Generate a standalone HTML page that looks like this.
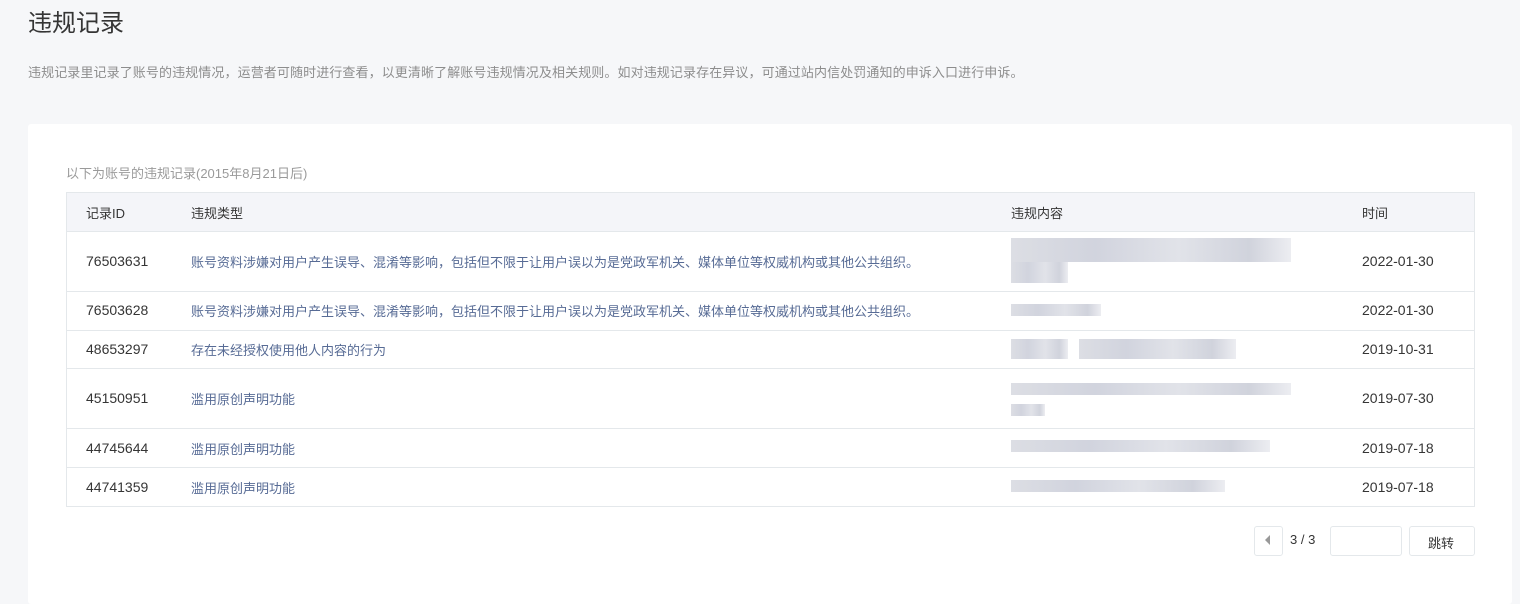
<!DOCTYPE html>
<html><head><meta charset="utf-8"><style>
*{margin:0;padding:0;box-sizing:border-box}
body{width:1520px;height:591px;background:#f6f7f9;font-family:"Liberation Sans","Noto Sans CJK SC",sans-serif;position:relative;overflow:hidden;color:#353535}
.a{position:absolute;white-space:nowrap}
h1{position:absolute;left:28px;top:3px;font-size:24px;font-weight:normal;color:#353535}
.card{position:absolute;left:28px;top:124px;width:1484px;height:480px;background:#fff;border-radius:3px}
.tbl{position:absolute;left:66px;top:192px;width:1409px;height:315px;border:1px solid #e4e8eb}
.hd{position:absolute;left:0;top:0;width:100%;height:39px;background:#f4f5f9;border-bottom:1px solid #e4e8eb}
.ln{position:absolute;left:0;width:100%;height:1px;background:#e4e8eb}
.t{font-size:14px;color:#353535}
.h{font-size:13px}
.lk{color:#576b95;font-size:13px}
.bl{position:absolute;height:12px;background:linear-gradient(90deg,#d6d8df,#c9ccd8 30%,#dcdee5 60%,#c8cbd6 85%,#e9eaef);opacity:.85}
.btn{position:absolute;border:1px solid #e4e8eb;border-radius:3px;background:#fff}
</style></head><body>
<h1>违规记录</h1>
<div class="a" style="left:28px;top:62px;font-size:13px;color:#8d8d8d;letter-spacing:0.1px">违规记录里记录了账号的违规情况，运营者可随时进行查看，以更清晰了解账号违规情况及相关规则。如对违规记录存在异议，可通过站内信处罚通知的申诉入口进行申诉。</div>
<div class="card"></div>
<div class="a" style="left:66px;top:163px;font-size:13px;color:#9a9a9a">以下为账号的违规记录(2015年8月21日后)</div>
<div class="tbl">
<div class="hd"></div>
<div class="ln" style="top:98px"></div>
<div class="ln" style="top:137px"></div>
<div class="ln" style="top:175px"></div>
<div class="ln" style="top:235px"></div>
<div class="ln" style="top:274px"></div>
</div>
<div class="a t h" style="left:86px;top:203px">记录ID</div>
<div class="a t h" style="left:191px;top:203px">违规类型</div>
<div class="a t h" style="left:1011px;top:203px">违规内容</div>
<div class="a t h" style="left:1362px;top:203px">时间</div>

<div class="a t" style="left:86px;top:253px">76503631</div>
<div class="a lk" style="left:191px;top:252px">账号资料涉嫌对用户产生误导、混淆等影响，包括但不限于让用户误以为是党政军机关、媒体单位等权威机构或其他公共组织。</div>
<div class="bl" style="left:1011px;top:238px;width:280px"></div>
<div class="bl" style="left:1011px;top:250px;width:280px"></div>
<div class="bl" style="left:1011px;top:262px;width:57px;height:21px"></div>
<div class="a t" style="left:1362px;top:253px">2022-01-30</div>

<div class="a t" style="left:86px;top:302px">76503628</div>
<div class="a lk" style="left:191px;top:301px">账号资料涉嫌对用户产生误导、混淆等影响，包括但不限于让用户误以为是党政军机关、媒体单位等权威机构或其他公共组织。</div>
<div class="bl" style="left:1011px;top:304px;width:90px"></div>
<div class="a t" style="left:1362px;top:302px">2022-01-30</div>

<div class="a t" style="left:86px;top:341px">48653297</div>
<div class="a lk" style="left:191px;top:340px">存在未经授权使用他人内容的行为</div>
<div class="bl" style="left:1011px;top:339px;width:57px;height:20px"></div>
<div class="bl" style="left:1079px;top:339px;width:157px;height:20px"></div>
<div class="a t" style="left:1362px;top:341px">2019-10-31</div>

<div class="a t" style="left:86px;top:390px">45150951</div>
<div class="a lk" style="left:191px;top:389px">滥用原创声明功能</div>
<div class="bl" style="left:1011px;top:383px;width:280px"></div>
<div class="bl" style="left:1011px;top:404px;width:34px"></div>
<div class="a t" style="left:1362px;top:390px">2019-07-30</div>

<div class="a t" style="left:86px;top:440px">44745644</div>
<div class="a lk" style="left:191px;top:439px">滥用原创声明功能</div>
<div class="bl" style="left:1011px;top:440px;width:259px"></div>
<div class="a t" style="left:1362px;top:440px">2019-07-18</div>

<div class="a t" style="left:86px;top:479px">44741359</div>
<div class="a lk" style="left:191px;top:478px">滥用原创声明功能</div>
<div class="bl" style="left:1011px;top:480px;width:214px"></div>
<div class="a t" style="left:1362px;top:479px">2019-07-18</div>

<div class="btn" style="left:1254px;top:526px;width:29px;height:30px"></div>
<div class="a" style="left:1265px;top:535px;width:0;height:0;border-top:5px solid transparent;border-bottom:5px solid transparent;border-right:5px solid #999"></div>
<div class="a t" style="left:1290px;top:532px;font-size:13px">3 / 3</div>
<div class="btn" style="left:1330px;top:526px;width:72px;height:30px"></div>
<div class="btn" style="left:1409px;top:526px;width:66px;height:30px"></div>
<div class="a t" style="left:1428px;top:533px;font-size:13px">跳转</div>
</body></html>
